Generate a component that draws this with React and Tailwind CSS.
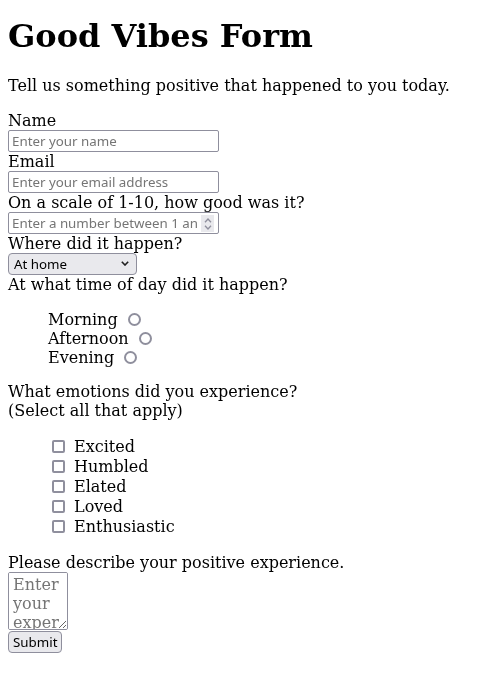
import React from 'react';

const inputClass =
  "block w-[211px] h-[22px] border border-[#8f8f9d] rounded-[2px] bg-white px-[3px] font-['Noto_Sans',sans-serif] text-[13.33px] leading-[normal] placeholder:text-[#757575]";

const App = () => {
  const times = ['Morning', 'Afternoon', 'Evening'];
  const emotions = ['Excited', 'Humbled', 'Elated', 'Loved', 'Enthusiastic'];

  return (
    <div className="p-2 font-['DejaVu_Serif',serif] text-base leading-[normal] text-black">
      <h1 className="text-[32px] font-bold mt-[9px] mb-[21px]">Good Vibes Form</h1>
      <p className="mb-4">Tell us something positive that happened to you today.</p>
      <form>
        <label className="block">Name</label>
        <input type="text" placeholder="Enter your name" className={inputClass} />
        <label className="block">Email</label>
        <input type="email" placeholder="Enter your email address" className={inputClass} />
        <label className="block">On a scale of 1-10, how good was it?</label>
        <div className="relative w-[211px]">
          <input
            type="number"
            min="1"
            max="10"
            placeholder="Enter a number between 1 and 10"
            className={inputClass + " pr-[20px] [appearance:textfield] [&::-webkit-inner-spin-button]:appearance-none [&::-webkit-outer-spin-button]:appearance-none"}
          />
          <div className="absolute right-[5px] top-[3px] w-[13px] h-[17px] bg-[#e9e9ed] flex flex-col items-center justify-center gap-[2px]">
            <svg width="8" height="5" viewBox="0 0 8 5" fill="none" stroke="#8f8f9d" strokeWidth="1.3">
              <path d="M1 4.2 L4 1 L7 4.2" />
            </svg>
            <svg width="8" height="5" viewBox="0 0 8 5" fill="none" stroke="#8f8f9d" strokeWidth="1.3">
              <path d="M1 0.8 L4 4 L7 0.8" />
            </svg>
          </div>
        </div>
        <label className="block">Where did it happen?</label>
        <div className="relative w-[129px]">
          <select className="block w-[129px] h-[22px] appearance-none border border-[#8f8f9d] rounded-[4px] bg-[#e9e9ed] pl-[5px] font-['Noto_Sans',sans-serif] text-[13.33px]">
            <option>At home</option>
            <option>At work</option>
            <option>Outside</option>
          </select>
          <svg className="absolute right-[8px] top-[8px] pointer-events-none" width="8" height="5" viewBox="0 0 8 5" fill="none" stroke="#1f1f1f" strokeWidth="1.6">
            <path d="M0.8 0.8 L4 4 L7.2 0.8" />
          </svg>
        </div>
        <p>At what time of day did it happen?</p>
        <ul className="mt-4 mb-[15px] pl-10">
          {times.map((t) => (
            <li key={t}>
              <label>
                {t}{' '}
                <input
                  type="radio"
                  name="time"
                  className="appearance-none ml-[5px] mr-[3px] align-[-1px] w-[13px] h-[13px] rounded-full border-2 border-[#8f8f9d] bg-white"
                />
              </label>
            </li>
          ))}
        </ul>
        <p>What emotions did you experience?</p>
        <p>(Select all that apply)</p>
        <ul className="mt-4 mb-[17px] pl-10">
          {emotions.map((e) => (
            <li key={e}>
              <label className="flex items-center h-[20px]">
                <input
                  type="checkbox"
                  className="appearance-none ml-[4px] mr-[9px] w-[13px] h-[13px] rounded-[2px] border-2 border-[#8f8f9d] bg-white"
                />
                {e}
              </label>
            </li>
          ))}
        </ul>
        <label className="block">Please describe your positive experience.</label>
        <textarea
          placeholder="Enter your experience"
          className="block w-[60px] h-[58px] border border-[#8f8f9d] rounded-[2px] bg-white px-[4px] py-[2px] text-base leading-[normal] placeholder:text-[#757575]"
        />
        <button
          type="submit"
          className="block mt-[1px] h-[22px] px-[4px] border border-[#8f8f9d] rounded-[4px] bg-[#e9e9ed] font-['Noto_Sans',sans-serif] text-[13.33px] leading-[normal]"
        >
          Submit
        </button>
      </form>
    </div>
  );
};

export default App;
